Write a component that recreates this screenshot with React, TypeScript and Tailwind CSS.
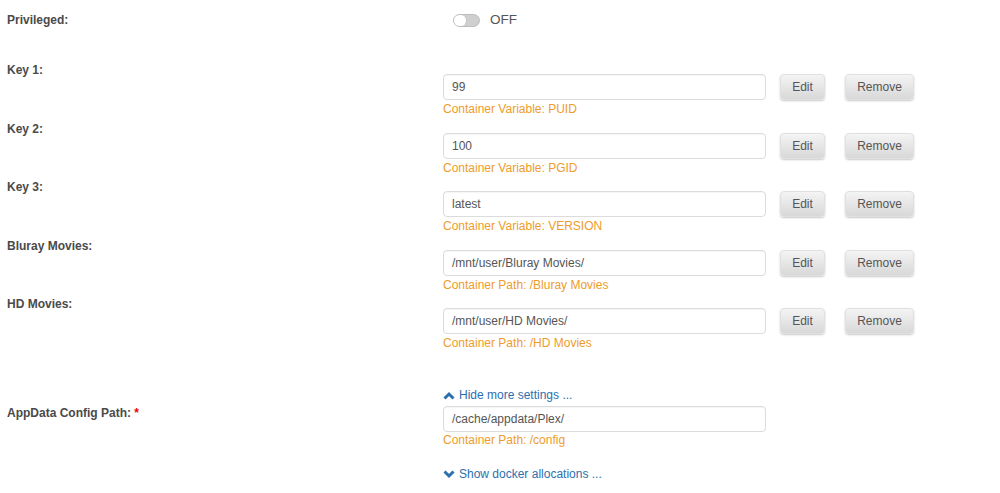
import React from 'react';

type Row = { label: string; value: string; note: string };

const rows: Row[] = [
  { label: 'Key 1:', value: '99', note: 'Container Variable: PUID' },
  { label: 'Key 2:', value: '100', note: 'Container Variable: PGID' },
  { label: 'Key 3:', value: 'latest', note: 'Container Variable: VERSION' },
  { label: 'Bluray Movies:', value: '/mnt/user/Bluray Movies/', note: 'Container Path: /Bluray Movies' },
  { label: 'HD Movies:', value: '/mnt/user/HD Movies/', note: 'Container Path: /HD Movies' },
];

function Chevron({ up }: { up?: boolean }) {
  return (
    <svg width="12" height="9" viewBox="0 0 12 9" className="mr-[4px]">
      <polyline
        points={up ? '1.5,7.5 6,3 10.5,7.5' : '1.5,1.5 6,6 10.5,1.5'}
        fill="none"
        stroke="#2c6fb0"
        strokeWidth="3"
      />
    </svg>
  );
}

function Field({ value }: { value: string }) {
  return (
    <div className="w-[323px] h-[26px] border border-[#dcdcdc] rounded-[4px] bg-white pl-[8px] flex items-center text-[12px] text-[#555] shadow-[inset_0_1px_1px_rgba(0,0,0,0.04)]">
      {value}
    </div>
  );
}

function Btn({ children, w }: { children: React.ReactNode; w: string }) {
  return (
    <button
      className={`${w} h-[26px] rounded-[4px] bg-gradient-to-b from-[#f4f4f4] to-[#d8d8d8] text-[12px] text-[#555] shadow-[0_1px_2px_rgba(0,0,0,0.22)] border border-[#e0e0e0]`}
    >
      {children}
    </button>
  );
}

export default function App() {
  return (
    <div className="w-[1000px] h-[493px] bg-white pl-[7px] font-['Liberation_Sans',Arial,sans-serif] overflow-hidden">
      {/* privileged */}
      <div className="grid grid-cols-[436px_1fr] h-[63px] pt-[13px]">
        <div className="text-[12px] leading-[14px] font-bold text-[#4a4a4a]">Privileged:</div>
        <div className="flex items-center h-[14px] pl-[10px]">
          <div className="w-[27px] h-[13px] rounded-full bg-[#cfcfcf] border border-[#bdbdbd] flex">
            <div className="w-[13px] h-full rounded-full bg-white border-r border-[#c4c4c4]" />
          </div>
          <span className="ml-[10px] text-[13.5px] text-[#555]">OFF</span>
        </div>
      </div>

      {rows.map((r) => (
        <div key={r.label} className="grid grid-cols-[436px_1fr] h-[58.5px]">
          <div className="text-[12px] leading-[14px] font-bold text-[#4a4a4a]">{r.label}</div>
          <div className="pt-[11px]">
            <div className="flex items-center">
              <Field value={r.value} />
              <div className="ml-[14px]">
                <Btn w="w-[45px]">Edit</Btn>
              </div>
              <div className="ml-[20px]">
                <Btn w="w-[69px]">Remove</Btn>
              </div>
            </div>
            <div className="text-[12px] leading-[18px] text-[#ee9c2a]">{r.note}</div>
          </div>
        </div>
      ))}

      {/* appdata */}
      <div className="grid grid-cols-[436px_1fr] mt-[32.5px]">
        <div className="pt-[18px] text-[12px] leading-[14px] font-bold text-[#4a4a4a]">
          AppData Config Path: <span className="text-[#e00]">*</span>
        </div>
        <div>
          <div className="flex items-center text-[12px] leading-[14px] text-[#2c6fb0]">
            <Chevron up />
            Hide more settings ...
          </div>
          <div className="mt-[4px]">
            <Field value="/cache/appdata/Plex/" />
          </div>
          <div className="text-[12px] leading-[16px] text-[#ee9c2a]">Container Path: /config</div>
          <div className="mt-[19px] flex items-center text-[12px] leading-[14px] text-[#2c6fb0]">
            <Chevron />
            Show docker allocations ...
          </div>
        </div>
      </div>
    </div>
  );
}
